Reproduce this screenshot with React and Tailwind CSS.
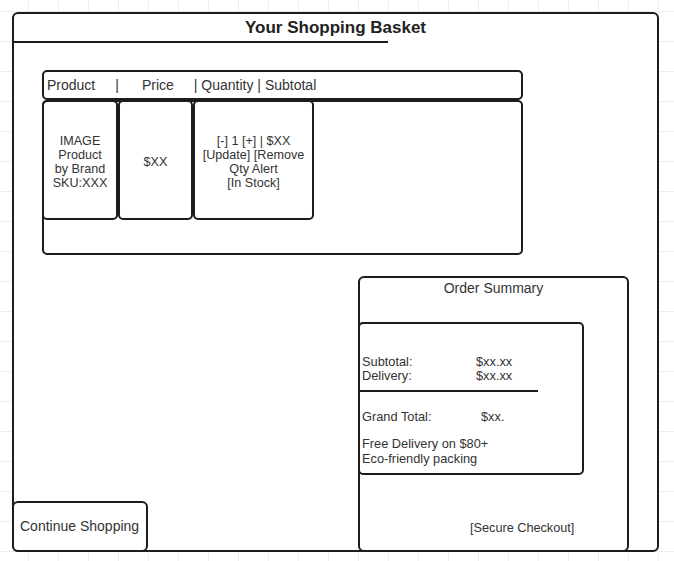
import React from 'react';

const font = { fontFamily: '"Liberation Sans", Arial, sans-serif' };

function Cell({ width, children }) {
  return (
    <div
      className={`${width} h-[120px] border-2 border-[#1c1c1c] rounded-[5px] flex flex-col items-center justify-center pt-[3px] text-center text-[12.6px] leading-[14px] text-[#333]`}
    >
      {children}
    </div>
  );
}

export default function App() {
  return (
    <div
      className="w-[674px] h-[561px] p-[12px] bg-white bg-[linear-gradient(to_right,#ededed_1px,transparent_1px),linear-gradient(to_bottom,#ededed_1px,transparent_1px)] bg-[size:30px_30px] bg-[position:28px_11px]"
      style={font}
    >
      <div className="w-[647px] h-[540px] border-2 border-[#1c1c1c] rounded-[6px] bg-white flex flex-col">
        {/* title */}
        <div className="h-[27px] flex items-center justify-center text-[17px] font-bold text-[#222]">
          Your Shopping Basket
        </div>
        <div className="-ml-[2px] w-[376px] h-[2px] bg-[#1c1c1c]" />

        {/* basket table */}
        <div className="ml-[28px] mt-[27px] w-[481px]">
          <div className="h-[30px] border-2 border-[#1c1c1c] rounded-[5px] flex items-center pl-[3px] text-[14px] text-[#333]">
            <span>Product</span>
            <span className="ml-[20px] text-[#333]">|</span>
            <span className="ml-[23px]">Price</span>
            <span className="ml-[20px] whitespace-pre">| Quantity | Subtotal</span>
          </div>
          <div className="h-[155px] border-2 border-[#1c1c1c] rounded-[5px]">
            <div className="flex -mt-[2px] -ml-[2px]">
              <Cell width="w-[76px]">
                <span>IMAGE</span>
                <span>Product</span>
                <span>by Brand</span>
                <span>SKU:XXX</span>
              </Cell>
              <Cell width="w-[75px]">
                <span>$XX</span>
              </Cell>
              <Cell width="w-[121px]">
                <span>[-] 1 [+] | $XX</span>
                <span>[Update] [Remove</span>
                <span>Qty Alert</span>
                <span>[In Stock]</span>
              </Cell>
            </div>
          </div>
        </div>

        {/* bottom row */}
        <div className="flex-1 flex items-end justify-between -ml-[2px] -mr-[2px] -mb-[2px]">
          <button className="w-[136px] h-[51px] border-2 border-[#1c1c1c] rounded-[6px] flex items-center pl-[6px] text-[14px] text-[#333] bg-white">
            Continue Shopping
          </button>

          <div className="mr-[30px] w-[271px] h-[276px] border-2 border-[#1c1c1c] rounded-[6px] flex flex-col text-[#333]">
            <div className="text-[14px] leading-[20px] text-center">Order Summary</div>
            <div className="mt-[24px] -ml-[2px] w-[226px] h-[153px] border-2 border-[#1c1c1c] rounded-[5px] text-[12.8px]">
              <div className="pt-[31px] pl-[2px] leading-[14px]">
                <div className="flex">
                  <span className="w-[114px]">Subtotal:</span>
                  <span>$xx.xx</span>
                </div>
                <div className="flex">
                  <span className="w-[114px]">Delivery:</span>
                  <span>$xx.xx</span>
                </div>
              </div>
              <div className="mt-[7px] -ml-[2px] w-[180px] h-[2px] bg-[#1c1c1c]" />
              <div className="mt-[17px] pl-[2px] leading-[15px] flex">
                <span className="w-[119px]">Grand Total:</span>
                <span>$xx.</span>
              </div>
              <div className="mt-[12px] pl-[2px] leading-[15px]">
                <div>Free Delivery on $80+</div>
                <div>Eco-friendly packing</div>
              </div>
            </div>
            <div className="mt-[45px] ml-[110px] text-[12.7px] leading-[16px]">[Secure Checkout]</div>
          </div>
        </div>
      </div>
    </div>
  );
}
